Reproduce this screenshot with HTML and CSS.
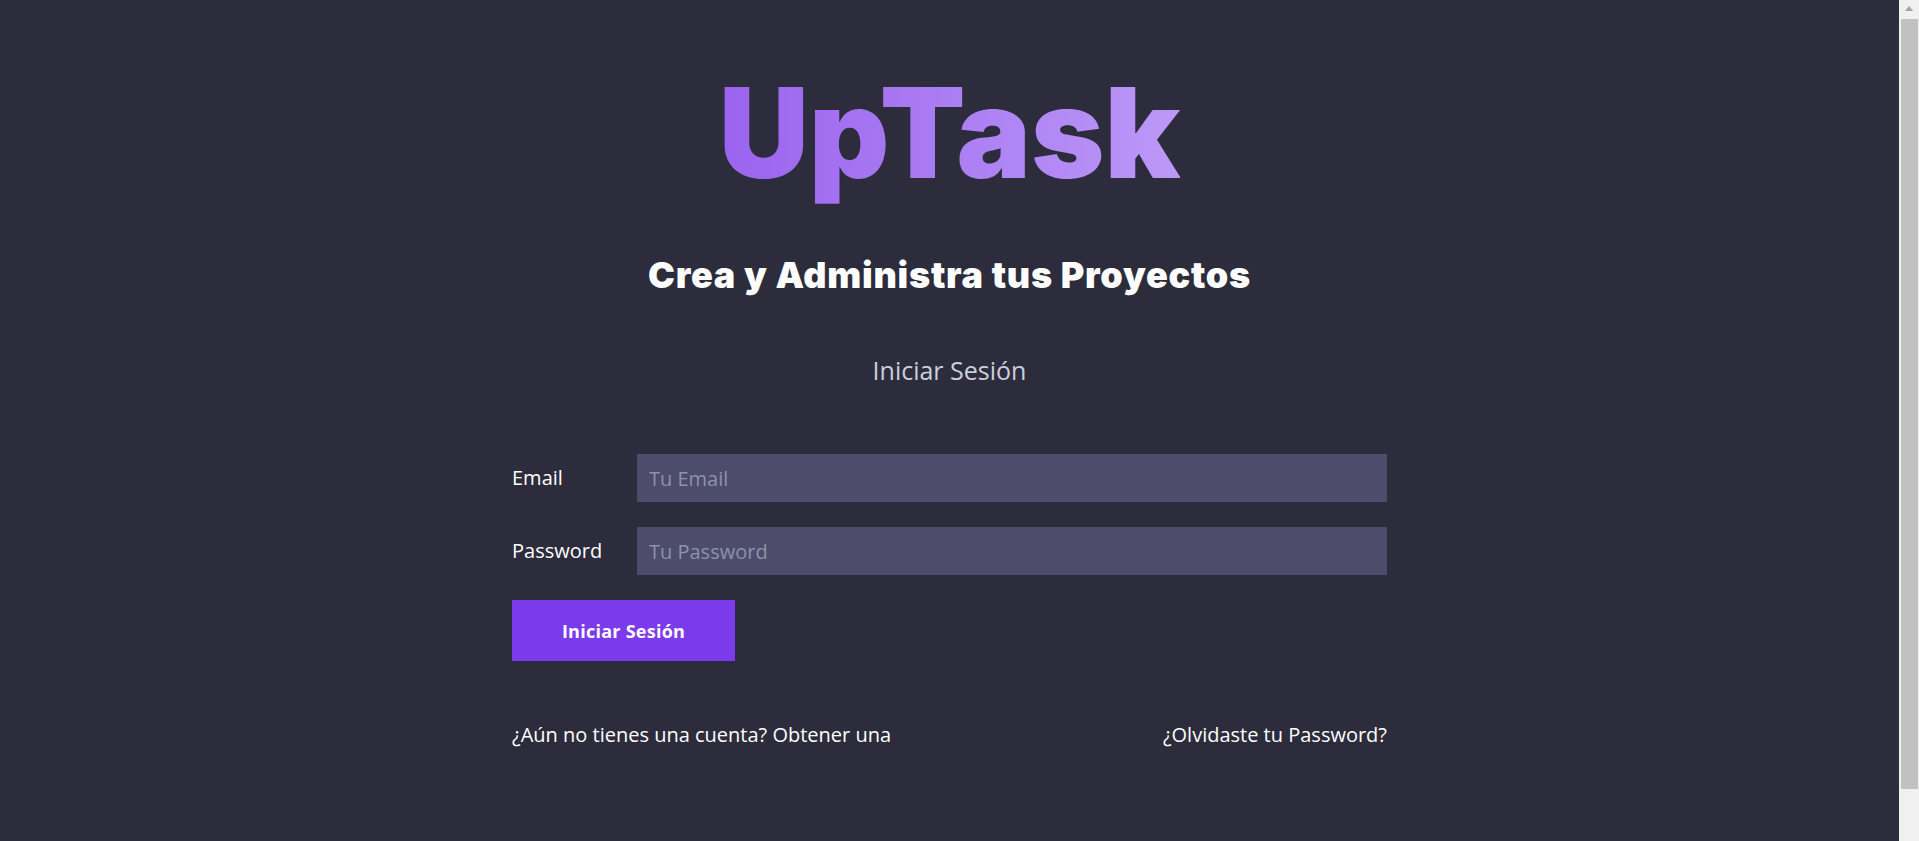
FILE: index.html
```html
<!DOCTYPE html>
<html lang="es">
<head>
<meta charset="utf-8">
<title>UpTask | Iniciar Sesión</title>
<link rel="stylesheet" href="styles.css">
</head>
<body>
<main class="page">
  <header class="brand">
    <h1 class="brand-title"><span class="brand-gradient">UpTask</span></h1>
    <p class="brand-tagline">Crea y Administra tus Proyectos</p>
  </header>

  <section class="auth">
    <h2 class="auth-heading">Iniciar Sesión</h2>

    <form class="auth-form">
      <div class="field">
        <label class="field-label" for="email">Email</label>
        <input class="field-input" type="email" id="email" placeholder="Tu Email">
      </div>
      <div class="field">
        <label class="field-label" for="password">Password</label>
        <input class="field-input" type="password" id="password" placeholder="Tu Password">
      </div>
      <div class="form-actions">
        <button class="btn-primary" type="submit">Iniciar Sesión</button>
      </div>
    </form>

    <nav class="auth-links">
      <a class="auth-link" href="#">¿Aún no tienes una cuenta? Obtener una</a>
      <a class="auth-link" href="#">¿Olvidaste tu Password?</a>
    </nav>
  </section>
</main>

<div class="scrollbar" aria-hidden="true">
  <span class="scrollbar-arrow"></span>
  <span class="scrollbar-thumb"></span>
</div>
</body>
</html>
```

FILE: styles.css
```css
html {
  background: #2d2c3c;
}

body {
  margin: 0 20px 0 0;
  background: #2d2c3c;
  font-family: "Open Sans", "Liberation Sans", sans-serif;
  color: #ffffff;
}

.page {
  width: 875px;
  margin: 0 auto;
  padding: 70px 0 60px;
}

.brand {
  text-align: center;
}

.brand-title {
  margin: 0;
  font-family: Inter, "Liberation Sans", sans-serif;
  font-weight: 900;
  font-size: 125px;
  line-height: 1;
}

.brand-gradient {
  background: linear-gradient(to right, #9a63ee, #bc98f7);
  -webkit-background-clip: text;
  background-clip: text;
  color: transparent;
}

.brand-tagline {
  margin: 60px 0 0;
  font-family: Inter, "Liberation Sans", sans-serif;
  font-weight: 900;
  font-size: 36px;
  line-height: 40px;
  letter-spacing: 0.75px;
  color: #ffffff;
}

.auth-heading {
  margin: 59px 0 0;
  text-align: center;
  font-weight: 400;
  font-size: 25px;
  line-height: 32px;
  color: #c9cfdc;
}

.auth-form {
  margin-top: 68px;
  display: flex;
  flex-direction: column;
  gap: 25px;
}

.field {
  display: flex;
  align-items: center;
}

.field-label {
  width: 125px;
  flex-shrink: 0;
  font-size: 20px;
  line-height: 28px;
  color: #ffffff;
}

.field-input {
  flex: 1;
  height: 48px;
  box-sizing: border-box;
  border: none;
  padding: 0 12px;
  background: #4d4c6a;
  font-family: "Open Sans", "Liberation Sans", sans-serif;
  font-size: 20px;
  color: #ffffff;
  outline: none;
}

.field-input::placeholder {
  color: #8c93a8;
}

.form-actions {
  display: flex;
}

.btn-primary {
  width: 223px;
  height: 61px;
  border: none;
  background: #7c3aed;
  color: #ffffff;
  font-family: "Open Sans", "Liberation Sans", sans-serif;
  font-weight: 700;
  font-size: 18px;
  letter-spacing: 0.25px;
  cursor: pointer;
}

.auth-links {
  margin-top: 60px;
  display: flex;
  justify-content: space-between;
}

.auth-link {
  font-size: 20px;
  line-height: 28px;
  color: #ffffff;
  text-decoration: none;
}

/* window scrollbar, as shown in the reference */
.scrollbar {
  position: fixed;
  top: 0;
  right: 0;
  bottom: 0;
  width: 20px;
  background: #f0f0f0;
}

.scrollbar-arrow {
  position: absolute;
  top: 6px;
  left: 6px;
  width: 0;
  height: 0;
  border-left: 4.5px solid transparent;
  border-right: 4.5px solid transparent;
  border-bottom: 5px solid #a3a3a3;
}

.scrollbar-thumb {
  position: absolute;
  top: 19px;
  left: 2px;
  right: 1px;
  height: 770px;
  background: #c1c1c1;
}
```
